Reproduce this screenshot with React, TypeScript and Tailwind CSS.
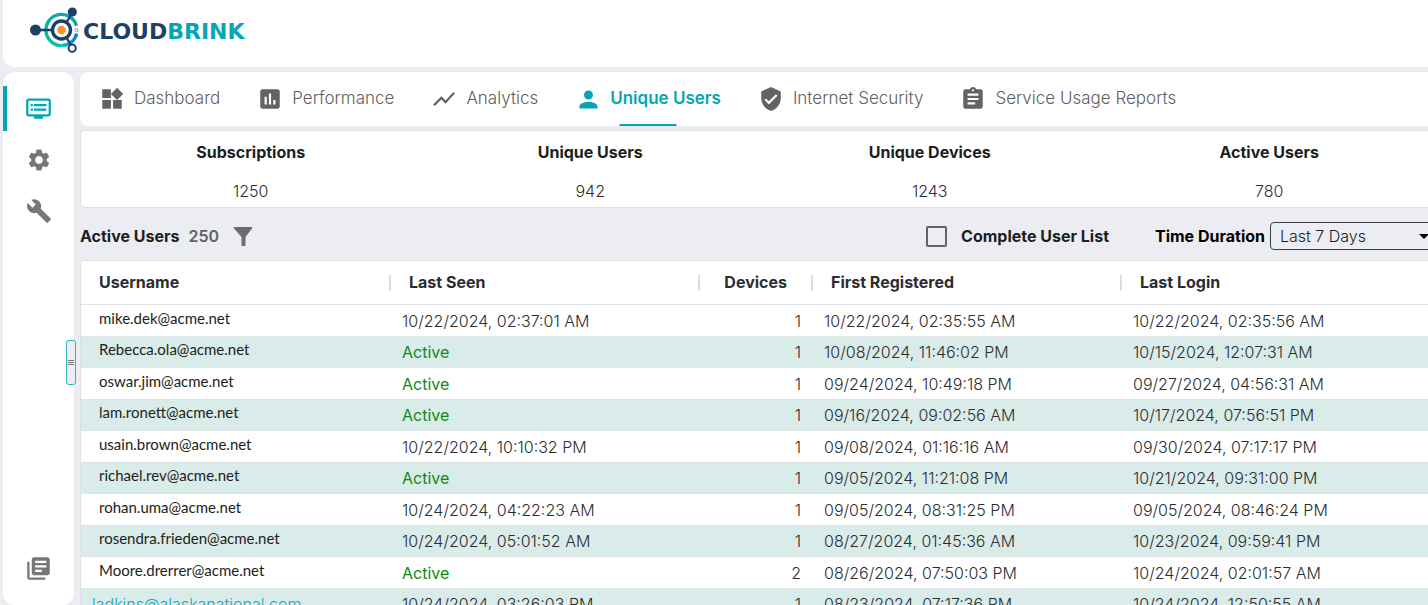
import {
  MdAssessment,
  MdAssignment,
  MdBuild,
  MdDvr,
  MdLibraryBooks,
  MdPerson,
  MdSettings,
  MdShowChart,
  MdVerifiedUser,
  MdWidgets,
} from "react-icons/md";
import type { IconType } from "react-icons";

type Tab = { label: string; icon: IconType; active?: boolean };

const tabs: Tab[] = [
  { label: "Dashboard", icon: MdWidgets },
  { label: "Performance", icon: MdAssessment },
  { label: "Analytics", icon: MdShowChart },
  { label: "Unique Users", icon: MdPerson, active: true },
  { label: "Internet Security", icon: MdVerifiedUser },
  { label: "Service Usage Reports", icon: MdAssignment },
];

const stats = [
  { label: "Subscriptions", value: 1250 },
  { label: "Unique Users", value: 942 },
  { label: "Unique Devices", value: 1243 },
  { label: "Active Users", value: 780 },
];

type User = { name: string; seen: string; devices: number; first: string; login: string; link?: boolean };

const users: User[] = [
  { name: "mike.dek@acme.net", seen: "10/22/2024, 02:37:01 AM", devices: 1, first: "10/22/2024, 02:35:55 AM", login: "10/22/2024, 02:35:56 AM" },
  { name: "Rebecca.ola@acme.net", seen: "Active", devices: 1, first: "10/08/2024, 11:46:02 PM", login: "10/15/2024, 12:07:31 AM" },
  { name: "oswar.jim@acme.net", seen: "Active", devices: 1, first: "09/24/2024, 10:49:18 PM", login: "09/27/2024, 04:56:31 AM" },
  { name: "lam.ronett@acme.net", seen: "Active", devices: 1, first: "09/16/2024, 09:02:56 AM", login: "10/17/2024, 07:56:51 PM" },
  { name: "usain.brown@acme.net", seen: "10/22/2024, 10:10:32 PM", devices: 1, first: "09/08/2024, 01:16:16 AM", login: "09/30/2024, 07:17:17 PM" },
  { name: "richael.rev@acme.net", seen: "Active", devices: 1, first: "09/05/2024, 11:21:08 PM", login: "10/21/2024, 09:31:00 PM" },
  { name: "rohan.uma@acme.net", seen: "10/24/2024, 04:22:23 AM", devices: 1, first: "09/05/2024, 08:31:25 PM", login: "09/05/2024, 08:46:24 PM" },
  { name: "rosendra.frieden@acme.net", seen: "10/24/2024, 05:01:52 AM", devices: 1, first: "08/27/2024, 01:45:36 AM", login: "10/23/2024, 09:59:41 PM" },
  { name: "Moore.drerrer@acme.net", seen: "Active", devices: 2, first: "08/26/2024, 07:50:03 PM", login: "10/24/2024, 02:01:57 AM" },
  { name: "ladkins@alaskanational.com", seen: "10/24/2024, 03:26:03 PM", devices: 1, first: "08/23/2024, 07:17:36 PM", login: "10/24/2024, 12:50:55 AM", link: true },
];

function LogoMark() {
  return (
    <svg viewBox="0 0 50 48" className="h-12 w-[50px] shrink-0 overflow-visible" fill="none" aria-hidden="true">
      <defs>
        <linearGradient id="ring" x1="0" y1="1" x2="1" y2="0.2">
          <stop offset="0" stopColor="#0bbfae" />
          <stop offset="0.55" stopColor="#0a8fdc" />
          <stop offset="1" stopColor="#0a7fe0" />
        </linearGradient>
        <linearGradient id="ringLeft" x1="0.3" y1="1" x2="0.7" y2="0">
          <stop offset="0" stopColor="#00c79a" />
          <stop offset="1" stopColor="#06a5b3" />
        </linearGradient>
      </defs>
      <path d="M31.5 41.6A15.6 15.6 0 1 1 46.5 21.7" stroke="url(#ringLeft)" strokeWidth="3.4" />
      <path d="M46.7 29.7A15.6 15.6 0 0 1 31.5 41.6" stroke="url(#ring)" strokeWidth="3.4" />
      <path d="M6 26H22M36.5 18.5L42 9M36.5 33.5L40.6 40.6" stroke="#1e3f66" strokeWidth="2.4" />
      <circle cx="31.5" cy="26" r="9" fill="#fff" stroke="#1e3f66" strokeWidth="3.4" />
      <circle cx="31.5" cy="26" r="4.2" fill="#fb9226" />
      <circle cx="5.5" cy="26" r="5.5" fill="#1e3f66" />
      <circle cx="42.3" cy="8" r="4.6" fill="#1e3f66" />
      <circle cx="42.2" cy="44.2" r="3.6" fill="#fff" stroke="#1e3f66" strokeWidth="2" />
      <circle cx="46.6" cy="26" r="1.5" fill="#fff" stroke="#7b8d9f" strokeWidth="0.9" />
    </svg>
  );
}

function ColumnHeader({ label, numeric }: { label: string; numeric?: boolean }) {
  return (
    <th scope="col" className={numeric ? "p-0 text-right font-bold" : "p-0 text-left font-bold"}>
      <div className="flex h-[43px] items-center">
        <span className={numeric ? "grow pr-6 pb-[2px]" : "grow pb-[2px] pl-[18px]"}>{label}</span>
        <span className="h-4 w-[2px] bg-[#dcdddf]" />
      </div>
    </th>
  );
}

export default function App() {
  return (
    <div className="flex h-screen flex-col overflow-hidden bg-[#ecedf2] pl-[3px] font-['Inter',sans-serif] text-[16px] font-light text-[#2c2d30]">
      <header className="flex h-[67px] shrink-0 items-start rounded-bl-xl bg-white pt-1 pl-[27px]">
        <a href="#home" className="flex items-center gap-[3px]">
          <LogoMark />
          <span className="pt-2 font-['DejaVu_Sans',sans-serif] text-[22px] leading-8 font-bold text-[#1e3f66]">
            CLOUD<span className="text-[#06a5b3]">BRINK</span>
          </span>
        </a>
      </header>

      <div className="flex min-h-0 grow gap-[6px] pt-[5px]">
        <aside className="relative flex w-[71px] shrink-0 flex-col rounded-xl bg-white pt-[14px]">
          <nav className="flex flex-col gap-[6px]" aria-label="Sections">
            <a href="#monitor" aria-label="Monitor" className="flex h-[45px] items-center justify-center border-l-4 border-[#06a5b3] pr-1 text-[#06a5b3]">
              <MdDvr className="size-[27px]" />
            </a>
            <a href="#settings" aria-label="Settings" className="flex h-[45px] items-center justify-center text-[#757779]">
              <MdSettings className="size-[26px]" />
            </a>
            <a href="#tools" aria-label="Tools" className="flex h-[45px] items-center justify-center text-[#757779]">
              <MdBuild className="size-[26px]" />
            </a>
          </nav>
          <a href="#docs" aria-label="Documents" className="mt-auto mb-[23px] flex items-center justify-center text-[#757779]">
            <MdLibraryBooks className="size-[27px]" />
          </a>
          <button
            type="button"
            aria-label="Resize side bar"
            className="absolute top-[268px] -right-[2px] flex h-[45px] w-[10px] flex-col items-center justify-center gap-px rounded-[3px] border border-[#2fb3bd] bg-[#edeef2]"
          >
            <span className="h-px w-[6px] bg-[#777]" />
            <span className="h-px w-[6px] bg-[#777]" />
            <span className="h-px w-[6px] bg-[#777]" />
          </button>
        </aside>

        <main className="-mr-3 flex min-w-0 grow flex-col">
          <nav className="flex h-[54px] shrink-0 gap-[37px] rounded-lg bg-white pl-[19px] text-[17px]" aria-label="Views">
            {tabs.map(({ label, icon: Icon, active }) => (
              <a
                key={label}
                href="#view"
                className={
                  active
                    ? "relative flex items-center gap-2 font-semibold text-[#06a5b3]"
                    : "flex items-center gap-[9px] text-[#5f6062]"
                }
              >
                <Icon className={active ? "size-[27px] text-[#06a5b3]" : "size-[26px] text-[#626365]"} />
                <span>{label}</span>
                {active && <span className="absolute bottom-0 left-1/2 h-[2px] w-[57px] -translate-x-1/2 bg-[#06a5b3]" />}
              </a>
            ))}
          </nav>

          <dl className="mt-1 grid h-[78px] shrink-0 grid-cols-4 rounded-[4px] border border-[#dfe0e3] bg-white pt-[9px] text-center leading-6">
            {stats.map((stat) => (
              <div key={stat.label} className="flex flex-col gap-[15px]">
                <dt className="font-bold text-[#1d1e20]">{stat.label}</dt>
                <dd>{stat.value}</dd>
              </div>
            ))}
          </dl>

          <div className="flex h-[52px] shrink-0 items-center pt-1">
            <h1 className="font-bold text-[#1d1e20]">Active Users</h1>
            <span className="ml-[9px] font-semibold text-[#626365]">250</span>
            <button type="button" aria-label="Filter" className="ml-[14px] text-[#6b6c6e]">
              <svg viewBox="0 0 20 20" className="size-5" fill="currentColor" aria-hidden="true">
                <path d="M1.5 1h17c.8 0 1 .8.5 1.400L12.500 11v8.200c0 .5-.3.8-.8.800H9.300c-.5 0-.8-.3-.8-.8V11L1 2.400C.5 1.800.7 1 1.500 1z" />
              </svg>
            </button>
            <label className="ml-auto flex items-center gap-[14px] font-bold text-[#1d1e20]">
              <input type="checkbox" className="size-[21px] appearance-none rounded-[2px] border-2 border-[#626365] checked:bg-[#06a5b3]" />
              Complete User List
            </label>
            <label htmlFor="duration" className="ml-[46px] font-bold text-black">
              Time Duration
            </label>
            <div className="relative ml-[5px]">
              <select id="duration" className="h-7 w-[170px] appearance-none rounded-[4px] border border-[#3b3c3e] bg-transparent pl-[9px] text-[#1d1e20]">
                <option>Last 7 Days</option>
                <option>Last 30 Days</option>
              </select>
              <svg viewBox="0 0 10 5" className="pointer-events-none absolute top-3 right-[11px] h-[5px] w-[10px]" aria-hidden="true">
                <path d="M0 0h10L5 5z" fill="#000" />
              </svg>
            </div>
          </div>

          <div className="shrink-0 rounded-t-[4px] border border-b-0 border-[#dfe0e3] bg-white">
            <table className="w-full table-fixed border-separate border-spacing-0 leading-6">
              <colgroup>
                <col className="w-[310px]" />
                <col className="w-[309px]" />
                <col className="w-[113px]" />
                <col className="w-[309px]" />
                <col />
              </colgroup>
              <thead>
                <tr>
                  <ColumnHeader label="Username" />
                  <ColumnHeader label="Last Seen" />
                  <ColumnHeader label="Devices" numeric />
                  <ColumnHeader label="First Registered" />
                  <ColumnHeader label="Last Login" />
                </tr>
              </thead>
              <tbody>
                {users.map((user) => (
                  <tr key={user.name} className="odd:h-8 even:h-[31px] even:bg-[#d9ecea] [&>td]:border-t [&>td]:border-[#dfe2e3]">
                    <td
                      className={
                        user.link
                          ? "p-0 pl-[11px] text-[#14a9b4]"
                          : "p-0 pb-[6px] pl-[18px] font-['Lato',sans-serif] text-[15px] font-normal text-[#1d1e20]"
                      }
                    >
                      {user.link ? <a href="#user">{user.name}</a> : user.name}
                    </td>
                    <td className={user.seen === "Active" ? "p-0 pl-[11px] font-normal text-[#0d8a14]" : "p-0 pl-[11px]"}>{user.seen}</td>
                    <td className="p-0 pr-3 text-right">{user.devices}</td>
                    <td className="p-0 pl-[11px]">{user.first}</td>
                    <td className="p-0 pl-[11px]">{user.login}</td>
                  </tr>
                ))}
              </tbody>
            </table>
          </div>
        </main>
      </div>
    </div>
  );
}
